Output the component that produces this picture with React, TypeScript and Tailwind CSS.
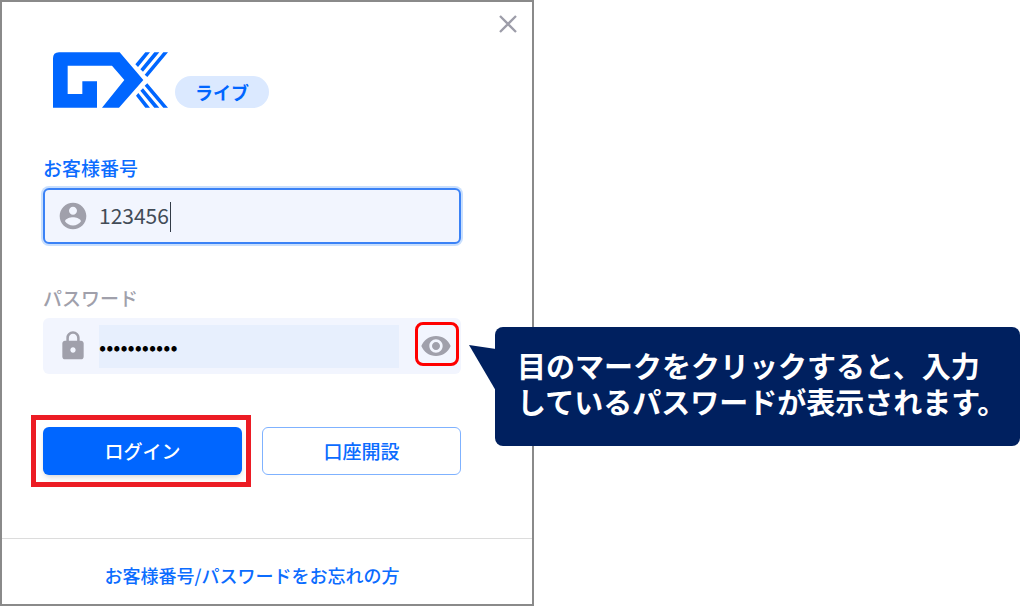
import React, { useState } from 'react';
import { MdLock, MdVisibility } from 'react-icons/md';

const GxLogo: React.FC = () => (
  <svg viewBox="0 0 345 166" className="w-[115px] h-14" fill="#0066ff" role="img" aria-label="GX">
    <path d="M18 0H200L271 83L198 166H147L214 83L177 40H44V125H88V87H132V166H0V18Q0 0 18 0Z" />
    <path d="M247 36L277 0H291L255 44ZM262 51L304 0H319L270 58ZM275 67L331 0H345L283 74Z" />
    <path d="M283 93L345 166H331L275 100ZM270 108L319 166H304L262 115ZM256 122L291 166H277L249 130Z" />
  </svg>
);

const AccountIcon: React.FC = () => (
  <svg viewBox="0 0 24 24" className="w-8 h-8 shrink-0" fill="currentColor" aria-hidden="true">
    <path d="M12 2C6.48 2 2 6.48 2 12s4.48 10 10 10 10-4.48 10-10S17.52 2 12 2zm0 3c1.66 0 3 1.34 3 3s-1.34 3-3 3-3-1.34-3-3 1.34-3 3-3zm0 14.2c-2.5 0-4.71-1.28-6-3.22.03-1.99 4-3.08 6-3.08 1.99 0 5.97 1.09 6 3.08-1.29 1.94-3.5 3.22-6 3.22z" />
  </svg>
);

const Callout: React.FC = () => (
  <div className="absolute left-full top-[9px] ml-[34px] z-10 rounded-lg bg-[#00205f] pl-[22px] pr-[10px] pt-5 pb-[27px]">
    <svg viewBox="0 0 27 46" className="absolute right-full top-[18px] -mr-px w-[27px] h-[46px]" aria-hidden="true">
      <path d="M0 0L27 4V46Z" fill="#00205f" />
    </svg>
    <p className="whitespace-nowrap pr-1 text-[29px] leading-9 font-bold text-white">
      目のマークをクリックすると、入力
      <br />
      しているパスワードが表示されます。
    </p>
  </div>
);

export default function App() {
  const [customerNo, setCustomerNo] = useState('123456');
  const [password, setPassword] = useState('password123');
  const [visible, setVisible] = useState(false);

  return (
    <main className="min-h-screen overflow-hidden bg-white font-['Noto_Sans_CJK_JP',sans-serif] font-medium">
      <div className="relative w-full max-w-[534px] border-2 border-[#8a8a8a] bg-white">
        <button type="button" aria-label="閉じる" className="absolute right-[15px] top-[13px] text-[#9d9da9]">
          <svg viewBox="0 0 18 18" className="w-[18px] h-[18px]" stroke="currentColor" strokeWidth="2.3" aria-hidden="true">
            <path d="M1 1L17 17M17 1L1 17" />
          </svg>
        </button>

        <form className="pl-[41px] pr-[71px] pt-[50px]" onSubmit={(e) => e.preventDefault()}>
          <div className="flex items-end gap-[7px] pl-[10px]">
            <GxLogo />
            <span className="flex h-8 items-center rounded-full bg-[#dbe9ff] px-5 text-lg font-bold text-[#0066ff]">
              ライブ
            </span>
          </div>

          {/* Customer number */}
          <label htmlFor="customer" className="mt-12 block text-[19px] leading-6 text-[#0b6cff]">
            お客様番号
          </label>
          <div className="relative mt-2 flex h-14 items-center gap-[10px] rounded-md border-2 border-[#3b82f6] bg-[#f2f5fe] pl-3 pr-4 text-[#a0a0ab] ring-2 ring-[#c9dffd]">
            <AccountIcon />
            <input
              id="customer"
              type="text"
              value={customerNo}
              onChange={(e) => setCustomerNo(e.target.value)}
              className="min-w-0 flex-1 bg-transparent text-[21px] font-normal text-[#424b57] outline-none"
            />
            <span className="absolute left-[125px] top-3 h-[30px] w-px bg-[#333b47]" />
          </div>

          {/* Password */}
          <label htmlFor="password" className="mt-[42px] block text-[19px] leading-6 text-[#a0a0ab]">
            パスワード
          </label>
          <div className="relative mt-2 flex h-14 items-center gap-[10px] rounded-md bg-[#f2f5fe] pl-[14px] pr-0.5 text-[#a0a0ab]">
            <MdLock className="w-8 h-8 shrink-0" aria-hidden="true" />
            <input
              id="password"
              type={visible ? 'text' : 'password'}
              value={password}
              onChange={(e) => setPassword(e.target.value)}
              className="h-[43px] min-w-0 flex-1 bg-[#e7effd] text-[21px] font-normal text-black outline-none"
            />
            <button
              type="button"
              aria-label="パスワードを表示"
              onClick={() => setVisible(!visible)}
              className="ml-1.5 mb-1 flex h-11 w-11 items-center justify-center rounded-lg border-3 border-[#ff0000] pt-1 pr-0.5"
            >
              <MdVisibility className="w-8 h-8 shrink-0" />
            </button>
            <Callout />
          </div>

          <div className="mt-[53px] grid grid-cols-2 gap-5 text-[19px]">
            <div className="relative">
              <button type="submit" className="h-12 w-full rounded-md bg-[#0066ff] text-white shadow-md">
                ログイン
              </button>
              <span className="pointer-events-none absolute -left-3 -right-[9px] -top-3 -bottom-3 border-5 border-[#ec1c24]" />
            </div>
            <button type="button" className="h-12 rounded-md border border-[#7fb2ff] text-[#0b6cff]">
              口座開設
            </button>
          </div>
        </form>

        <div className="mt-[63px] border-t border-[#dcdcdc] pl-[41px] pr-[71px] pt-6 pb-[17px] text-center text-lg leading-6">
          <a href="#reminder" className="text-[#0b6cff]">
            お客様番号/パスワードをお忘れの方
          </a>
        </div>
      </div>
    </main>
  );
}
